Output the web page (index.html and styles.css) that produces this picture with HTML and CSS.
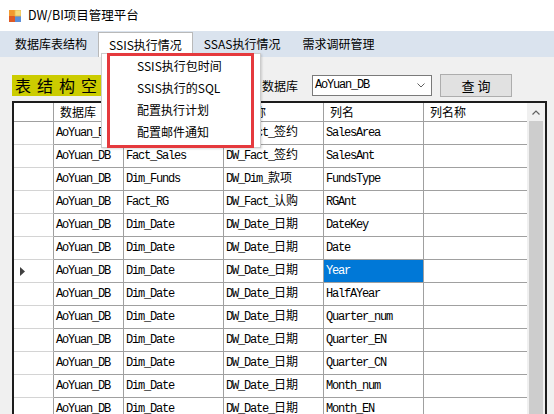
FILE: index.html
```html
<!DOCTYPE html>
<html lang="zh">
<head>
<meta charset="utf-8">
<title>DW/BI项目管理平台</title>
<link rel="stylesheet" href="styles.css">
</head>
<body>
<div class="window">
  <header class="titlebar">
    <svg class="app-icon" width="12" height="12" viewBox="0 0 12 12">
      <rect x="0" y="0" width="6" height="6" fill="#f39a2e"/>
      <rect x="6" y="0" width="6" height="6" fill="#f6dc7c"/>
      <rect x="0" y="6" width="6" height="6" fill="#dd5a26"/>
      <rect x="6" y="6" width="6" height="6" fill="#5b8fd8"/>
      <rect x="6" y="0" width="6" height="6" fill="none" stroke="#e9b84a" stroke-width="0.8"/>
    </svg>
    <span class="title">DW/BI项目管理平台</span>
  </header>

  <nav class="menubar">
    <span class="menu-item">数据库表结构</span>
    <span class="menu-item active">SSIS执行情况</span>
    <span class="menu-item">SSAS执行情况</span>
    <span class="menu-item">需求调研管理</span>
  </nav>

  <section class="toolbar">
    <div class="banner">表结构空间查询</div>
    <span class="db-label">数据库</span>
    <div class="combo">
      <span class="combo-text">AoYuan_DB</span>
      <svg class="chev" width="8" height="5" viewBox="0 0 8 5"><path d="M0.5 0.5 L4 4 L7.5 0.5" fill="none" stroke="#606060" stroke-width="1"/></svg>
    </div>
    <button class="query-btn">查 询</button>
  </section>

  <div class="grid">
    <div class="grid-body">
      <div class="row head">
        <div class="cell rh"></div>
        <div class="cell">数据库</div>
        <div class="cell">表名</div>
        <div class="cell">表名称</div>
        <div class="cell">列名</div>
        <div class="cell last">列名称</div>
      </div>
      <div class="row">
        <div class="cell rh"></div>
        <div class="cell">AoYuan_DB</div><div class="cell">Fact_Sales</div><div class="cell">DW_Fact_<span class="zh">签约</span></div><div class="cell">SalesArea</div><div class="cell last"></div>
      </div>
      <div class="row">
        <div class="cell rh"></div>
        <div class="cell">AoYuan_DB</div><div class="cell">Fact_Sales</div><div class="cell">DW_Fact_<span class="zh">签约</span></div><div class="cell">SalesAnt</div><div class="cell last"></div>
      </div>
      <div class="row">
        <div class="cell rh"></div>
        <div class="cell">AoYuan_DB</div><div class="cell">Dim_Funds</div><div class="cell">DW_Dim_<span class="zh">款项</span></div><div class="cell">FundsType</div><div class="cell last"></div>
      </div>
      <div class="row">
        <div class="cell rh"></div>
        <div class="cell">AoYuan_DB</div><div class="cell">Fact_RG</div><div class="cell">DW_Fact_<span class="zh">认购</span></div><div class="cell">RGAnt</div><div class="cell last"></div>
      </div>
      <div class="row">
        <div class="cell rh"></div>
        <div class="cell">AoYuan_DB</div><div class="cell">Dim_Date</div><div class="cell">DW_Date_<span class="zh">日期</span></div><div class="cell">DateKey</div><div class="cell last"></div>
      </div>
      <div class="row">
        <div class="cell rh"></div>
        <div class="cell">AoYuan_DB</div><div class="cell">Dim_Date</div><div class="cell">DW_Date_<span class="zh">日期</span></div><div class="cell">Date</div><div class="cell last"></div>
      </div>
      <div class="row">
        <div class="cell rh"><svg class="cur" width="5" height="9" viewBox="0 0 5 9"><path d="M0 0 L5 4.5 L0 9 Z" fill="#404040"/></svg></div>
        <div class="cell">AoYuan_DB</div><div class="cell">Dim_Date</div><div class="cell">DW_Date_<span class="zh">日期</span></div><div class="cell selected">Year</div><div class="cell last"></div>
      </div>
      <div class="row">
        <div class="cell rh"></div>
        <div class="cell">AoYuan_DB</div><div class="cell">Dim_Date</div><div class="cell">DW_Date_<span class="zh">日期</span></div><div class="cell">HalfAYear</div><div class="cell last"></div>
      </div>
      <div class="row">
        <div class="cell rh"></div>
        <div class="cell">AoYuan_DB</div><div class="cell">Dim_Date</div><div class="cell">DW_Date_<span class="zh">日期</span></div><div class="cell">Quarter_num</div><div class="cell last"></div>
      </div>
      <div class="row">
        <div class="cell rh"></div>
        <div class="cell">AoYuan_DB</div><div class="cell">Dim_Date</div><div class="cell">DW_Date_<span class="zh">日期</span></div><div class="cell">Quarter_EN</div><div class="cell last"></div>
      </div>
      <div class="row">
        <div class="cell rh"></div>
        <div class="cell">AoYuan_DB</div><div class="cell">Dim_Date</div><div class="cell">DW_Date_<span class="zh">日期</span></div><div class="cell">Quarter_CN</div><div class="cell last"></div>
      </div>
      <div class="row">
        <div class="cell rh"></div>
        <div class="cell">AoYuan_DB</div><div class="cell">Dim_Date</div><div class="cell">DW_Date_<span class="zh">日期</span></div><div class="cell">Month_num</div><div class="cell last"></div>
      </div>
      <div class="row">
        <div class="cell rh"></div>
        <div class="cell">AoYuan_DB</div><div class="cell">Dim_Date</div><div class="cell">DW_Date_<span class="zh">日期</span></div><div class="cell">Month_EN</div><div class="cell last"></div>
      </div>
    </div>
    <div class="vscroll">
      <div class="sb-up">
        <svg width="8" height="5" viewBox="0 0 8 5"><path d="M0.5 4.5 L4 1 L7.5 4.5" fill="none" stroke="#606060" stroke-width="1.2"/></svg>
      </div>
      <div class="sb-thumb"></div>
    </div>
  </div>

  <div class="dropdown">
    <div class="dd-item">SSIS执行包时间</div>
    <div class="dd-item">SSIS执行的SQL</div>
    <div class="dd-item">配置执行计划</div>
    <div class="dd-item">配置邮件通知</div>
    <div class="highlight"></div>
  </div>
</div>
</body>
</html>
```

FILE: styles.css
```css
* { box-sizing: border-box; }

html, body {
  margin: 0;
  padding: 0;
}

body {
  width: 554px;
  height: 414px;
  overflow: hidden;
  background: #f0f0f0;
  font-family: "Noto Sans CJK SC", "Noto Sans", sans-serif;
  font-size: 12px;
  color: #000;
}

.window {
  position: relative;
  width: 554px;
  height: 414px;
  overflow: hidden;
}

/* title bar */
.titlebar {
  height: 31px;
  background: #fff;
  display: flex;
  align-items: center;
  padding-left: 9px;
  gap: 7px;
}
.app-icon { display: block; margin-top: 1px; }
.title { font-size: 12.5px; line-height: 1; }

/* menu bar */
.menubar {
  height: 26px;
  background: #dae3ee;
  display: flex;
  align-items: flex-end;
  padding-left: 4px;
}
.menu-item {
  height: 25px;
  line-height: 24px;
  padding: 0 11px;
  white-space: nowrap;
}
.menu-item.active {
  background: #fff;
  border: 1px solid #b9b9b9;
  border-bottom: none;
  padding: 0 10px;
  line-height: 23px;
}

/* toolbar */
.toolbar {
  display: flex;
  align-items: center;
  margin-top: 17px;
  height: 22px;
  padding-left: 12px;
}
.banner {
  width: 238px;
  height: 21px;
  background: #cccc00;
  font-size: 16px;
  line-height: 21px;
  padding-left: 3px;
  letter-spacing: 6px;
  white-space: nowrap;
  margin-top: 1px;
}
.db-label {
  margin-left: 12px;
  font-size: 12px;
}
.combo {
  margin-left: 14px;
  width: 120px;
  height: 21px;
  border: 1px solid #7a7a7a;
  background: #fff;
  display: flex;
  align-items: center;
  padding-left: 2px;
}
.combo-text {
  font-family: "Liberation Mono", monospace;
  font-size: 12px;
  letter-spacing: -1.2px;
}
.chev { margin-left: auto; margin-right: 6px; display: block; }
.query-btn {
  margin-left: 8px;
  width: 72px;
  height: 23px;
  background: #e1e1e1;
  border: 1px solid #adadad;
  font-family: "Noto Sans CJK SC", sans-serif;
  font-size: 13px;
  padding: 0;
  color: #000;
  margin-top: 1px;
}

/* grid */
.grid {
  margin: 5px 7px 0 12px;
  height: 330px;
  border: 2px solid #1c1c1c;
  border-bottom: none;
  background: #fff;
  display: flex;
  overflow: hidden;
}
.grid-body { flex: 1; min-width: 0; }
.row {
  display: grid;
  grid-template-columns: 40px 70px 100px 100px 100px 1fr;
  height: 23px;
}
.row.head { height: 19px; }
.cell {
  border-right: 1px solid #a0a0a0;
  border-bottom: 1px solid #a0a0a0;
  font-family: "Liberation Mono", monospace;
  font-size: 12px;
  letter-spacing: -1.2px;
  line-height: 22px;
  padding-left: 2px;
  white-space: nowrap;
  overflow: hidden;
}
.cell.last { border-right: none; }
.cell.rh {
  border-bottom-color: #d4d4d4;
  padding-left: 6px;
  display: flex;
  align-items: center;
}
.row.head .cell {
  font-family: "Noto Sans CJK SC", sans-serif;
  font-size: 12px;
  letter-spacing: 0;
  line-height: 18px;
  padding-left: 6px;
  border-bottom-color: #a0a0a0;
}
.zh {
  font-family: "Noto Sans CJK SC", sans-serif;
  font-size: 12px;
  letter-spacing: 0;
  line-height: 1;
}
.cell.selected {
  background: #0078d7;
  color: #fff;
}
.cur { display: block; }

/* scrollbar */
.vscroll {
  width: 18px;
  background: #f0f0f0;
  display: flex;
  flex-direction: column;
}
.sb-up {
  height: 18px;
  display: flex;
  align-items: center;
  justify-content: center;
}
.sb-up svg { display: block; }
.sb-thumb {
  flex: 1;
  margin: 0 2px;
  background: #cdcdcd;
}

/* dropdown menu */
.dropdown {
  position: absolute;
  left: 101px;
  top: 53px;
  width: 160px;
  height: 95px;
  background: #fff;
  border: 1px solid #cccccc;
  box-shadow: 1px 1px 2px rgba(0,0,0,0.15);
  padding-top: 1px;
}
.dd-item {
  height: 22px;
  line-height: 22px;
  padding-left: 35px;
  white-space: nowrap;
}
.highlight {
  position: absolute;
  left: 5px;
  top: -1px;
  width: 147px;
  height: 95px;
  border: 3px solid #e5393d;
}
```
